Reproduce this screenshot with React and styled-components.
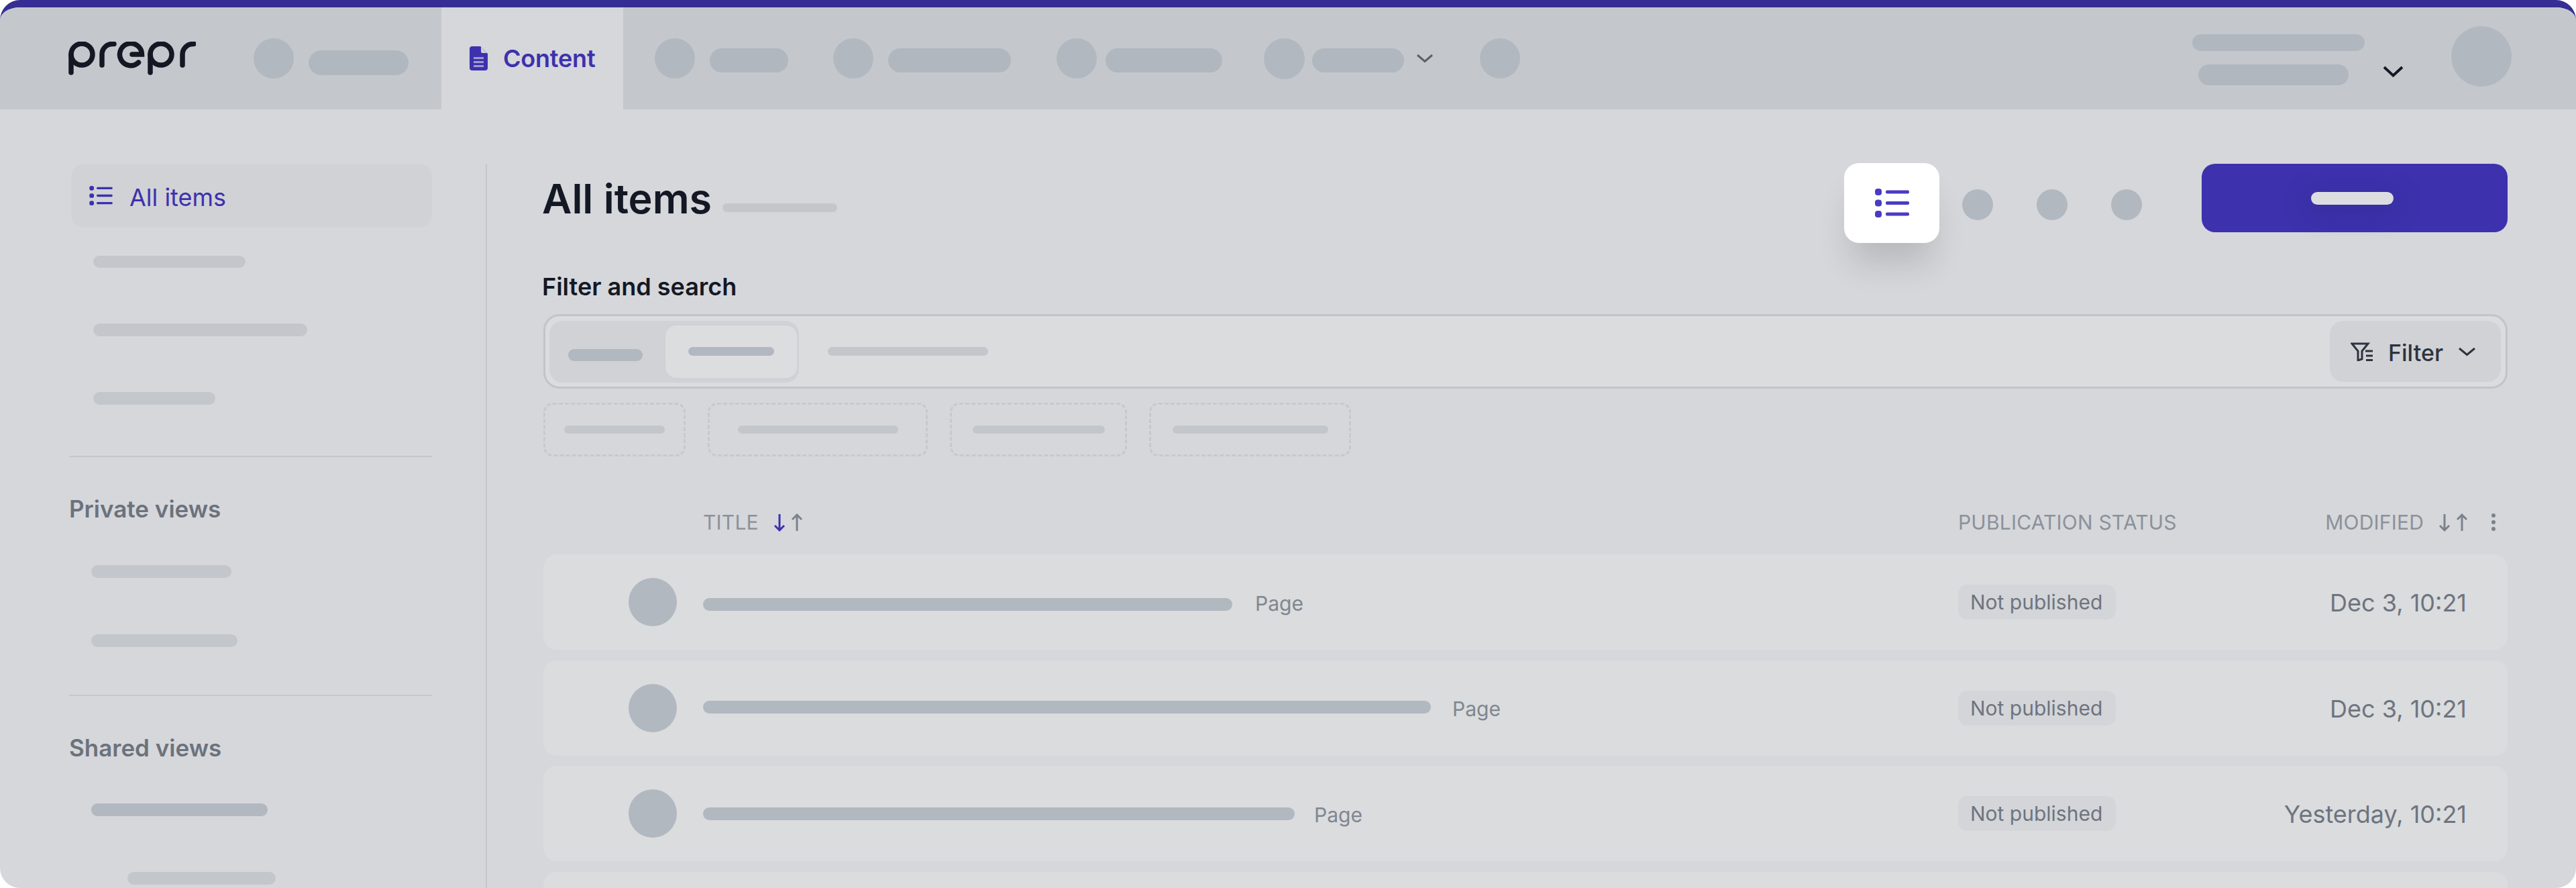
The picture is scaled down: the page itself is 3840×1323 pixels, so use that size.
import React from 'react';
import styled, { createGlobalStyle } from 'styled-components';

const GlobalStyle = createGlobalStyle`
  html, body {
    margin: 0;
    background: #ffffff;
    font-family: Inter, "Liberation Sans", sans-serif;
  }
`;

const tones = {
  dark: '#b2b8bf',
  mid: '#c3c7cb',
  onBar: '#b0b7bf',
};

const rows = [
  { id: 1, bar: 789, barTop: 7, gap: 34, date: 'Dec 3, 10:21' },
  { id: 2, bar: 1085, barTop: -3, gap: 32, date: 'Dec 3, 10:21' },
  { id: 3, bar: 882, barTop: 1, gap: 29, date: 'Yesterday, 10:21' },
];

const ListIcon = ({ width, height }) => (
  <svg width={width} height={height} viewBox="0 0 51 43" fill="currentColor">
    <rect x="0" y="0" width="10" height="10" rx="4" />
    <rect x="0" y="16.500" width="10" height="10" rx="4" />
    <rect x="0" y="33" width="10" height="10" rx="4" />
    <rect x="16" y="2.500" width="35" height="5" rx="2" />
    <rect x="16" y="19" width="35" height="5" rx="2" />
    <rect x="16" y="35.500" width="35" height="5" rx="2" />
  </svg>
);

const Chevron = ({ width, height, stroke, color }) => (
  <svg width={width} height={height} viewBox={`0 0 ${width} ${height}`} fill="none">
    <path
      d={`M2 2 L${width / 2} ${height - 2.5} L${width - 2} 2`}
      stroke={color}
      strokeWidth={stroke}
    />
  </svg>
);

const SortArrows = ({ active }) => (
  <svg width="44" height="27" viewBox="0 0 44 27" fill="none" strokeWidth="3">
    <path d="M9 1 V25 M2 18 L9 25 L16 18" stroke={active ? '#3d31ad' : '#7c828c'} />
    <path d="M35 26 V2 M28 9 L35 2 L42 9" stroke="#7c828c" />
  </svg>
);

const DocIcon = () => (
  <svg width="27" height="36" viewBox="0 0 27 36">
    <path
      d="M4 0 H16 L27 11 V32 A4 4 0 0 1 23 36 H4 A4 4 0 0 1 0 32 V4 A4 4 0 0 1 4 0 Z"
      fill="#3d31ad"
    />
    <path d="M17 1 L26 10 H19 A2 2 0 0 1 17 8 Z" fill="#cfd1dc" />
    <rect x="6" y="16" width="15" height="3" fill="#9f9ad0" />
    <rect x="6" y="22" width="15" height="3" fill="#9f9ad0" />
    <rect x="6" y="28" width="15" height="3" fill="#9f9ad0" />
  </svg>
);

const FilterIcon = () => (
  <svg width="34" height="28" viewBox="0 0 34 28" fill="none" stroke="#2e333d" strokeWidth="3">
    <path d="M2 2 H26 L17 13 V25 L11 27 V13 Z" />
    <path d="M22 13 H33 M23 20 H33 M23 26.500 H33" />
  </svg>
);

const Logo = () => (
  <svg width="190" height="50" viewBox="0 0 190 50" fill="none" stroke="#141824" strokeWidth="7.500" strokeLinecap="round" aria-label="prepr">
    <circle cx="20" cy="19" r="16" />
    <path d="M4 19 V46" />
    <path d="M50 35 V19 A15.500 15.500 0 0 1 66 3.500 H68" />
    <path d="M95 19 H109.500 A16.500 16.500 0 1 0 104.500 31" />
    <circle cx="138" cy="19" r="16" />
    <path d="M122 19 V46" />
    <path d="M170 35 V19 A15.500 15.500 0 0 1 185.500 3.500 H187" />
  </svg>
);

const App = () => {
  return (
    <>
      <GlobalStyle />
      <Shell>
        <TopBar>
          <LogoSlot>
            <Logo />
          </LogoSlot>
          <NavItem $gap={22}>
            <Dot $size={60} />
            <Bar $w={149} $h={37} $tone="onBar" $mt={13} />
          </NavItem>
          <ActiveTab>
            <DocIcon />
            Content
          </ActiveTab>
          <NavItem $gap={22} $ml={47}>
            <Dot $size={60} />
            <Bar $w={117} $h={36} $tone="onBar" $mt={6} />
          </NavItem>
          <NavItem $gap={22} $ml={67}>
            <Dot $size={60} />
            <Bar $w={183} $h={36} $tone="onBar" $mt={6} />
          </NavItem>
          <NavItem $gap={13} $ml={68}>
            <Dot $size={60} />
            <Bar $w={174} $h={36} $tone="onBar" $mt={6} />
          </NavItem>
          <NavItem $gap={11} $ml={62}>
            <Dot $size={61} />
            <Bar $w={137} $h={36} $tone="onBar" $mt={6} />
            <ChevronSlot>
              <Chevron width={26} height={14} stroke={3} color="#5b616c" />
            </ChevronSlot>
          </NavItem>
          <NavItem $ml={69}>
            <Dot $size={60} />
          </NavItem>
          <UserBlock>
            <UserLines>
              <Bar $w={257} $h={25} $tone="onBar" />
              <Bar $w={224} $h={31} $tone="onBar" $ml={9} />
            </UserLines>
            <UserChevron>
              <Chevron width={31} height={17} stroke={4} color="#141824" />
            </UserChevron>
            <Dot $size={90} $mt={-6} />
          </UserBlock>
        </TopBar>

        <Body>
          <Sidebar>
            <SideActive>
              <ListIcon width={37} height={29} />
              <SideActiveLabel>All items</SideActiveLabel>
            </SideActive>
            <SideList $top={42} $gap={83}>
              <Bar $w={227} $h={18} $tone="mid" $ml={36} />
              <Bar $w={319} $h={19} $tone="mid" $ml={36} />
              <Bar $w={182} $h={19} $tone="mid" $ml={36} />
            </SideList>
            <Divider $top={76} />
            <SideHeading>Private views</SideHeading>
            <SideList $top={64} $gap={84}>
              <Bar $w={209} $h={19} $tone="mid" $ml={33} />
              <Bar $w={218} $h={19} $tone="mid" $ml={33} />
            </SideList>
            <Divider $top={71} />
            <SideHeading>Shared views</SideHeading>
            <SideList $top={63} $gap={83}>
              <Bar $w={263} $h={19} $tone="dark" $ml={33} />
              <Bar $w={221} $h={19} $tone="mid" $ml={87} />
            </SideList>
          </Sidebar>

          <Main>
            <TitleRow>
              <Title>All items</Title>
              <Bar $w={171} $h={13} $tone="mid" $ml={16} $mt={59} />
              <Actions>
                <ViewButton>
                  <ListIcon width={51} height={43} />
                </ViewButton>
                <ViewDots>
                  <Dot $size={46} />
                  <Dot $size={46} />
                  <Dot $size={46} />
                </ViewDots>
                <PrimaryButton>
                  <PrimaryLabel />
                </PrimaryButton>
              </Actions>
            </TitleRow>

            <FilterLabel>Filter and search</FilterLabel>
            <SearchBox>
              <Segments>
                <Bar $w={111} $h={18} $tone="dark" $ml={28} $mt={10} />
                <ActiveSegment>
                  <Bar $w={128} $h={13} $tone="dark" />
                </ActiveSegment>
              </Segments>
              <Bar $w={239} $h={13} $tone="mid" $ml={43} />
              <FilterButton>
                <FilterIcon />
                <FilterText>Filter</FilterText>
                <Chevron width={27} height={14} stroke={3} color="#2e333d" />
              </FilterButton>
            </SearchBox>

            <Chips>
              <Chip $w={212}><Bar $w={150} $h={12} $tone="mid" /></Chip>
              <Chip $w={328}><Bar $w={239} $h={12} $tone="mid" /></Chip>
              <Chip $w={264}><Bar $w={197} $h={12} $tone="mid" /></Chip>
              <Chip $w={301}><Bar $w={232} $h={12} $tone="mid" /></Chip>
            </Chips>

            <TableHead>
              <span />
              <HeadCell>
                TITLE
                <SortArrows active />
              </HeadCell>
              <HeadCell>PUBLICATION STATUS</HeadCell>
              <HeadCellEnd>
                MODIFIED
                <SortArrows />
                <Kebab>
                  <i />
                  <i />
                  <i />
                </Kebab>
              </HeadCellEnd>
            </TableHead>

            <Rows>
              {rows.map((row) => (
                <Row key={row.id}>
                  <AvatarCell>
                    <Dot $size={72} />
                  </AvatarCell>
                  <TitleCell $gap={row.gap}>
                    <Bar $w={row.bar} $h={19} $tone="dark" $mt={row.barTop} />
                    <TypeLabel>Page</TypeLabel>
                  </TitleCell>
                  <div>
                    <StatusPill>Not published</StatusPill>
                  </div>
                  <DateCell>{row.date}</DateCell>
                </Row>
              ))}
              <Row />
            </Rows>
          </Main>
        </Body>
      </Shell>
    </>
  );
};

const Shell = styled.div`
  width: 3840px;
  height: 1323px;
  box-sizing: border-box;
  overflow: hidden;
  background: #d5d7db;
  border-top: 11px solid #362e94;
  border-radius: 30px;
  display: flex;
  flex-direction: column;
`;

const TopBar = styled.header`
  height: 152px;
  flex: none;
  background: #c4c8cc;
  display: flex;
  align-items: center;
  padding-left: 102px;
  padding-right: 96px;
`;

const LogoSlot = styled.div`
  width: 276px;
  display: flex;
`;

const NavItem = styled.div`
  display: flex;
  align-items: center;
  gap: ${({ $gap }) => $gap || 0}px;
  margin-left: ${({ $ml }) => $ml || 0}px;
`;

const ActiveTab = styled.div`
  width: 271px;
  height: 100%;
  margin-left: 49px;
  box-sizing: border-box;
  padding-left: 42px;
  background: #d5d7db;
  display: flex;
  align-items: center;
  gap: 23px;
  color: #3d31ad;
  font-size: 36px;
  font-weight: 600;
  letter-spacing: -0.2px;
`;

const ChevronSlot = styled.div`
  display: flex;
  margin-left: 7px;
`;

const UserBlock = styled.div`
  margin-left: auto;
  display: flex;
  align-items: center;
`;

const UserLines = styled.div`
  display: flex;
  flex-direction: column;
  gap: 20px;
  margin-top: 4px;
`;

const UserChevron = styled.div`
  display: flex;
  margin: 39px 71px 0 27px;
`;

const Dot = styled.div`
  width: ${({ $size }) => $size}px;
  height: ${({ $size }) => $size}px;
  flex: none;
  border-radius: 50%;
  background: #b2b8bf;
  margin-top: ${({ $mt }) => $mt || 0}px;
`;

const Bar = styled.div`
  width: ${({ $w }) => $w}px;
  height: ${({ $h }) => $h}px;
  flex: none;
  border-radius: ${({ $h }) => $h / 2}px;
  background: ${({ $tone }) => tones[$tone]};
  margin-left: ${({ $ml }) => $ml || 0}px;
  margin-top: ${({ $mt }) => $mt || 0}px;
`;

const Body = styled.div`
  flex: 1;
  min-height: 0;
  display: flex;
  padding-top: 81px;
`;

const Sidebar = styled.aside`
  width: 726px;
  flex: none;
  box-sizing: border-box;
  padding: 0 80px 0 103px;
  border-right: 2px solid #c3c6cb;
`;

const SideActive = styled.div`
  height: 95px;
  margin-left: 3px;
  box-sizing: border-box;
  padding-left: 26px;
  border-radius: 20px;
  background: #d0d2d6;
  color: #3d31ad;
  display: flex;
  align-items: center;
  gap: 24px;
`;

const SideActiveLabel = styled.span`
  margin-top: 5px;
  font-size: 36px;
  font-weight: 400;
`;

const SideList = styled.div`
  display: flex;
  flex-direction: column;
  gap: ${({ $gap }) => $gap}px;
  padding-top: ${({ $top }) => $top}px;
`;

const Divider = styled.div`
  height: 2px;
  margin-top: ${({ $top }) => $top}px;
  background: #c3c6cb;
`;

const SideHeading = styled.h4`
  margin: 57px 0 0;
  font-size: 35px;
  line-height: 40px;
  font-weight: 600;
  color: #6c727c;
`;

const Main = styled.main`
  flex: 1;
  min-width: 0;
  box-sizing: border-box;
  padding: 0 102px 0 84px;
`;

const TitleRow = styled.div`
  height: 118px;
  display: flex;
  align-items: flex-start;
`;

const Title = styled.h1`
  margin: 16px 0 0 -2px;
  font-size: 61px;
  line-height: 72px;
  font-weight: 600;
  color: #141824;
`;

const Actions = styled.div`
  margin-left: auto;
  display: flex;
  align-items: flex-start;
`;

const ViewButton = styled.div`
  width: 142px;
  height: 119px;
  margin-top: -1px;
  border-radius: 22px;
  background: #ffffff;
  color: #4a3bc4;
  display: flex;
  align-items: center;
  justify-content: center;
  box-shadow: 0 40px 50px -10px rgba(0, 0, 0, 0.14);
`;

const ViewDots = styled.div`
  display: flex;
  gap: 65px;
  margin: 38px 89px 0 34px;
`;

const PrimaryButton = styled.div`
  width: 456px;
  height: 102px;
  box-sizing: border-box;
  padding-right: 7px;
  border-radius: 20px;
  background: #3d31ad;
  display: flex;
  align-items: center;
  justify-content: center;
`;

const PrimaryLabel = styled.div`
  width: 123px;
  height: 19px;
  border-radius: 10px;
  background: #dcdde0;
  box-shadow: 0 8px 30px 10px rgba(50, 45, 140, 0.35);
`;

const FilterLabel = styled.div`
  margin: 45px 0 0 -2px;
  font-size: 36px;
  line-height: 40px;
  font-weight: 600;
  color: #141824;
`;

const SearchBox = styled.div`
  height: 111px;
  margin-top: 21px;
  box-sizing: border-box;
  padding: 0 7px 0 6px;
  border: 3px solid #c1c4c9;
  border-radius: 24px;
  background: #dadcde;
  display: flex;
  align-items: center;
`;

const Segments = styled.div`
  width: 372px;
  height: 92px;
  box-sizing: border-box;
  padding-right: 3px;
  border-radius: 20px;
  background: #d0d2d6;
  display: flex;
  align-items: center;
  justify-content: space-between;
`;

const ActiveSegment = styled.div`
  width: 196px;
  height: 78px;
  border-radius: 16px;
  background: #dcdddf;
  box-shadow: 0 0 0 3px #cfd1d5;
  display: flex;
  align-items: center;
  justify-content: center;
`;

const FilterButton = styled.div`
  margin-left: auto;
  width: 255px;
  height: 91px;
  box-sizing: border-box;
  padding-left: 31px;
  border-radius: 20px;
  background: #d0d2d6;
  color: #2e333d;
  display: flex;
  align-items: center;
  gap: 22px;
`;

const FilterText = styled.span`
  margin-top: 3px;
  font-size: 34px;
  font-weight: 500;
`;

const Chips = styled.div`
  display: flex;
  gap: 33px;
  margin-top: 21px;
`;

const Chip = styled.div`
  width: ${({ $w }) => $w}px;
  height: 80px;
  box-sizing: border-box;
  border: 3px dashed #c6c9cd;
  border-radius: 14px;
  display: flex;
  align-items: center;
  justify-content: center;
`;

const rowColumns = '237px 1871px 300px 1fr';

const TableHead = styled.div`
  display: grid;
  grid-template-columns: ${rowColumns};
  align-items: center;
  margin-top: 80px;
  height: 32px;
  padding: 0 18px 0 1px;
`;

const HeadCell = styled.div`
  display: flex;
  align-items: center;
  gap: 22px;
  font-size: 30px;
  font-weight: 400;
  letter-spacing: 0.2px;
  color: #8c919a;
  white-space: nowrap;
`;

const HeadCellEnd = styled(HeadCell)`
  justify-content: flex-end;
  gap: 22px;
`;

const Kebab = styled.div`
  display: flex;
  flex-direction: column;
  gap: 4px;
  margin-left: 13px;

  i {
    display: block;
    width: 6px;
    height: 6px;
    border-radius: 50%;
    background: #7c828c;
  }
`;

const Rows = styled.div`
  display: flex;
  flex-direction: column;
  gap: 15.500px;
  margin-top: 34px;
`;

const Row = styled.div`
  height: 142px;
  flex: none;
  display: grid;
  grid-template-columns: ${rowColumns};
  align-items: center;
  padding: 0 61px 0 1px;
  border-radius: 20px;
  background: #dadcde;
`;

const AvatarCell = styled.div`
  display: flex;
  justify-content: flex-end;
  padding-right: 39px;
`;

const TitleCell = styled.div`
  display: flex;
  align-items: center;
  gap: ${({ $gap }) => $gap}px;
`;

const TypeLabel = styled.span`
  margin-top: 3px;
  font-size: 30px;
  color: #80868f;
`;

const StatusPill = styled.span`
  display: inline-block;
  height: 52px;
  line-height: 52px;
  padding: 0 20px 0 18px;
  border-radius: 14px;
  background: #d3d5d9;
  font-size: 30px;
  color: #6e747e;
  white-space: nowrap;
`;

const DateCell = styled.div`
  margin-top: 2px;
  text-align: right;
  font-size: 36px;
  color: #6e747e;
  white-space: nowrap;
`;

export default App;
